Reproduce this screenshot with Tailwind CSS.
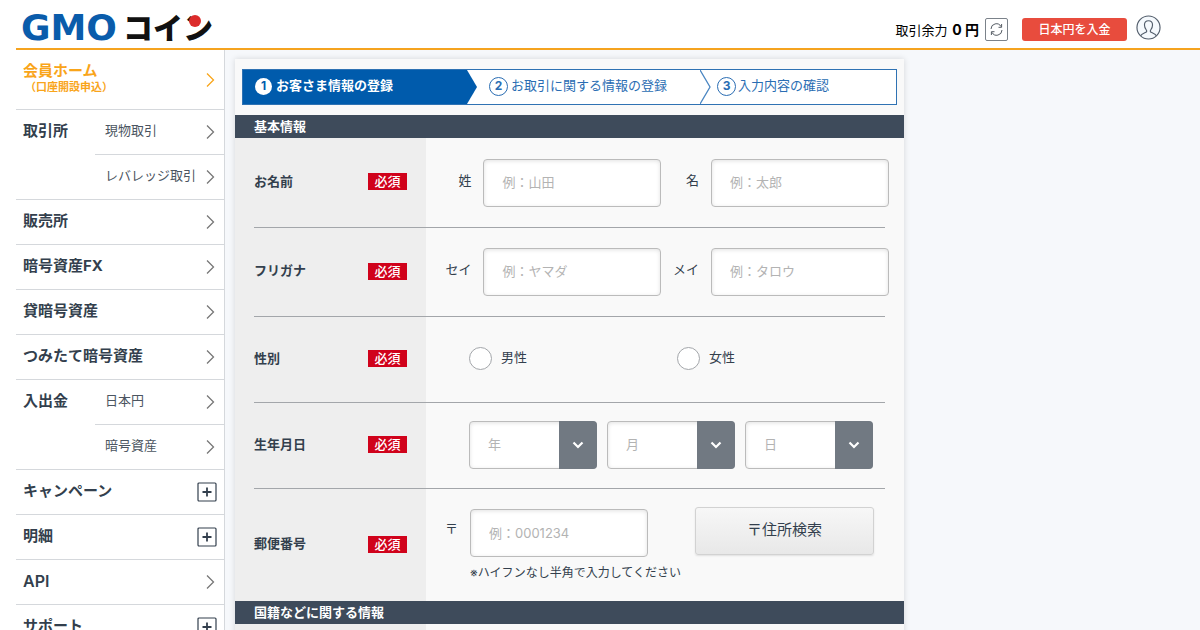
<!DOCTYPE html>
<html lang="ja">
<head>
<meta charset="utf-8">
<meta name="viewport" content="width=device-width, initial-scale=1">
<title>GMOコイン</title>
<script src="https://cdn.jsdelivr.net/npm/@tailwindcss/browser@4"></script>
</head>
<body class="min-h-screen bg-white font-['Inter','Noto_Sans_CJK_JP',sans-serif] text-[13px] text-[#333f4d]">
<svg class="hidden" aria-hidden="true">
  <symbol id="chev" viewBox="0 0 9 16"><path d="M1 1.500L7.500 8L1 14.500" fill="none" stroke="currentColor" stroke-width="1.300"/></symbol>
  <symbol id="plus" viewBox="0 0 20 20"><rect x="1" y="1" width="18" height="18" rx="1" fill="none" stroke="currentColor" stroke-width="1.200"/><path d="M5.500 10H14.500M10 5.500V14.500" stroke="currentColor" stroke-width="1.800"/></symbol>
  <symbol id="down" viewBox="0 0 12 8"><path d="M1.500 1.500L6 6L10.500 1.500" fill="none" stroke="currentColor" stroke-width="2.200"/></symbol>
</svg>

<header class="ml-4 flex h-[50px] items-center border-b-2 border-[#f5a31f] pl-[6px] pr-[39px]">
  <a href="#" aria-label="GMOコイン">
    <svg class="overflow-visible" width="192" height="48" viewBox="0 0 192 48">
      <text x="-1" y="40" font-family="DejaVu Sans" font-weight="700" font-size="36" fill="#0a5cab">GMO</text>
      <text x="101" y="39" font-family="Noto Sans CJK JP" font-weight="900" font-size="30" fill="#111">コイン</text>
      <circle cx="173" cy="21" r="6" fill="#dc2b2b"/>
    </svg>
  </a>
  <div class="ml-auto flex items-center pt-[10px]">
    <p class="whitespace-nowrap pt-px text-[13px] text-black">取引余力 <b class="ml-px text-[14px]">0 円</b></p>
    <button type="button" aria-label="更新" class="ml-[6px] grid size-[23px] place-items-center rounded-[2px] border border-[#7b828a] text-[#555c64]">
      <svg width="13" height="13" viewBox="0 0 13 13" fill="none" stroke="currentColor" stroke-width="1"><path d="M1 6A5.300 5.300 0 0 1 11 3.600M12 7A5.300 5.300 0 0 1 2 9.400"/><path d="M11.600 1V4.300H8.500M1.400 12V8.700H4.500"/></svg>
    </button>
    <button type="button" class="ml-[14px] h-[23px] w-[105px] rounded-[3px] bg-[#e84c3d] text-[12px] font-medium leading-[23px] text-white">日本円を入金</button>
    <button type="button" aria-label="アカウント" class="-mt-1 ml-[9px] text-[#525d6b]">
      <svg width="25" height="25" viewBox="0 0 26 26" fill="#f5f9fd" stroke="currentColor" stroke-width="1.200"><circle cx="13" cy="13" r="12"/><path d="M4.800 21.700C5.800 19.300 8.500 19 10.300 18C11.400 17.400 11.300 16.400 10.700 15.600C9.400 14 8.800 12.300 8.800 10.500C8.800 7.600 10.500 6 13 6S17.200 7.600 17.200 10.500C17.200 12.300 16.600 14 15.300 15.600C14.700 16.400 14.600 17.400 15.700 18C17.500 19 20.200 19.300 21.200 21.700" fill="none"/></svg>
    </button>
  </div>
</header>

<div class="flex">
  <nav class="ml-4 w-[209px] shrink-0 border-r border-[#d5d8dc] text-[15px] font-bold [&_svg]:shrink-0">
    <a href="#" class="flex h-[60px] items-center border-b border-[#d5d8dc] pl-[7px] pr-[9px] text-[#f9a51a]">
      <span class="flex-1 leading-4">会員ホーム<span class="block pb-[2px] pl-[2px] text-[11px] leading-4">（口座開設申込）</span></span>
      <svg class="h-4 w-[9px]"><use href="#chev"/></svg>
    </a>
    <div class="flex border-b border-[#d5d8dc]">
      <span class="w-[79px] pl-[7px] pt-[10px] leading-[22px]">取引所</span>
      <div class="flex-1 text-[13px] font-normal text-[#4b5561]">
        <a href="#" class="flex h-[45px] items-center justify-between border-b border-[#d5d8dc] pl-[10px] pr-[9px]"><span class="pb-[2px]">現物取引</span><svg class="h-4 w-[9px] text-[#777]"><use href="#chev"/></svg></a>
        <a href="#" class="flex h-[44px] items-center justify-between pl-[10px] pr-[9px]"><span class="whitespace-nowrap pb-[2px]">レバレッジ取引</span><svg class="h-4 w-[9px] text-[#777]"><use href="#chev"/></svg></a>
      </div>
    </div>
    <a href="#" class="flex h-[45px] items-center justify-between border-b border-[#d5d8dc] pl-[7px] pr-[9px]"><span class="pb-[2px]">販売所</span><svg class="h-4 w-[9px] text-[#777]"><use href="#chev"/></svg></a>
    <a href="#" class="flex h-[45px] items-center justify-between border-b border-[#d5d8dc] pl-[7px] pr-[9px]"><span class="pb-[2px]">暗号資産FX</span><svg class="h-4 w-[9px] text-[#777]"><use href="#chev"/></svg></a>
    <a href="#" class="flex h-[45px] items-center justify-between border-b border-[#d5d8dc] pl-[7px] pr-[9px]"><span class="pb-[2px]">貸暗号資産</span><svg class="h-4 w-[9px] text-[#777]"><use href="#chev"/></svg></a>
    <a href="#" class="flex h-[45px] items-center justify-between border-b border-[#d5d8dc] pl-[7px] pr-[9px]"><span class="pb-[2px]">つみたて暗号資産</span><svg class="h-4 w-[9px] text-[#777]"><use href="#chev"/></svg></a>
    <div class="flex border-b border-[#d5d8dc]">
      <span class="w-[79px] pl-[7px] pt-[10px] leading-[22px]">入出金</span>
      <div class="flex-1 text-[13px] font-normal text-[#4b5561]">
        <a href="#" class="flex h-[45px] items-center justify-between border-b border-[#d5d8dc] pl-[10px] pr-[9px]"><span class="pb-[2px]">日本円</span><svg class="h-4 w-[9px] text-[#777]"><use href="#chev"/></svg></a>
        <a href="#" class="flex h-[44px] items-center justify-between pl-[10px] pr-[9px]"><span class="pb-[2px]">暗号資産</span><svg class="h-4 w-[9px] text-[#777]"><use href="#chev"/></svg></a>
      </div>
    </div>
    <button type="button" class="flex h-[45px] w-full items-center justify-between border-b border-[#d5d8dc] px-[7px]"><span class="pb-[2px]">キャンペーン</span><svg class="size-5"><use href="#plus"/></svg></button>
    <button type="button" class="flex h-[45px] w-full items-center justify-between border-b border-[#d5d8dc] px-[7px]"><span class="pb-[2px]">明細</span><svg class="size-5"><use href="#plus"/></svg></button>
    <a href="#" class="flex h-[45px] items-center justify-between border-b border-[#d5d8dc] pl-[7px] pr-[9px]"><span class="pb-[2px] text-[16px] font-semibold">API</span><svg class="h-4 w-[9px] text-[#777]"><use href="#chev"/></svg></a>
    <button type="button" class="flex h-[45px] w-full items-center justify-between border-b border-[#d5d8dc] px-[7px]"><span class="pb-[2px]">サポート</span><svg class="size-5"><use href="#plus"/></svg></button>
  </nav>

  <main class="min-w-0 flex-1 bg-[#f6f8fb] pl-[10px] pt-[9px]">
    <form class="max-w-[669px] bg-[#f9f9f9] pt-[10px] shadow-[0_0_6px_rgba(0,0,0,0.14)]">
      <ol class="mx-[7px] flex h-[36px] border border-[#2f72b3] bg-white text-[#2a6db3]">
        <li class="flex bg-[#005bac] font-bold text-white">
          <span class="flex w-[224px] items-center gap-1 pb-[2px] pl-3"><span class="grid size-[17px] place-items-center rounded-full bg-white text-[12px] leading-none text-[#005bac]">1</span><span>お客さま情報の登録</span></span>
          <svg class="bg-white" width="10" height="34" viewBox="0 0 10 34"><path d="M0 0L10 17L0 34Z" fill="#005bac"/></svg>
        </li>
        <li class="flex">
          <span class="flex w-[223px] items-center gap-[3px] pb-[2px] pl-3"><span class="grid size-[19px] place-items-center rounded-full border border-[#2a6db3] text-[12px] font-bold leading-none">2</span><span class="whitespace-nowrap">お取引に関する情報の登録</span></span>
          <svg width="11" height="34" viewBox="0 0 11 34"><path d="M0 0L10 17L0 34" fill="none" stroke="#4a86c2" stroke-width="1.300"/></svg>
        </li>
        <li class="flex items-center gap-[2px] pb-[2px] pl-[6px]"><span class="grid size-[19px] place-items-center rounded-full border border-[#2a6db3] text-[12px] font-bold leading-none">3</span><span class="whitespace-nowrap">入力内容の確認</span></li>
      </ol>

      <h2 class="mt-[10px] h-[23px] bg-[#3e4b5b] pl-[19px] font-bold leading-[23px] text-white">基本情報</h2>
      <div class="bg-[linear-gradient(to_right,#eee_191px,#f9f9f9_191px)] px-[19px]">
        <div class="flex h-[90px] items-center border-b border-[#a3a6aa]">
          <div class="flex w-[172px] shrink-0 items-center justify-between pb-[2px] pr-[19px]"><b>お名前</b><span class="h-[17px] w-[39px] bg-[#d0021b] text-center font-medium leading-[16px] text-white">必須</span></div>
          <label for="sei" class="w-[46px] pb-1 text-right">姓</label>
          <input id="sei" type="text" placeholder="例：山田" class="ml-3 h-[48px] w-[178px] rounded-[4px] border border-[#bbb] bg-white px-[18px] pb-[2px] shadow-[inset_0_1px_4px_rgba(0,0,0,0.12)] placeholder:text-[#b3b3b3]">
          <label for="mei" class="w-[38px] pb-1 text-right">名</label>
          <input id="mei" type="text" placeholder="例：太郎" class="-mr-1 ml-3 h-[48px] w-[178px] rounded-[4px] border border-[#bbb] bg-white px-[18px] pb-[2px] shadow-[inset_0_1px_4px_rgba(0,0,0,0.12)] placeholder:text-[#b3b3b3]">
        </div>
        <div class="flex h-[89px] items-center border-b border-[#a3a6aa]">
          <div class="flex w-[172px] shrink-0 items-center justify-between pb-[2px] pr-[19px]"><b>フリガナ</b><span class="h-[17px] w-[39px] bg-[#d0021b] text-center font-medium leading-[16px] text-white">必須</span></div>
          <label for="seik" class="w-[46px] pb-1 text-right">セイ</label>
          <input id="seik" type="text" placeholder="例：ヤマダ" class="ml-3 h-[48px] w-[178px] rounded-[4px] border border-[#bbb] bg-white px-[18px] pb-[2px] shadow-[inset_0_1px_4px_rgba(0,0,0,0.12)] placeholder:text-[#b3b3b3]">
          <label for="meik" class="w-[38px] pb-1 text-right">メイ</label>
          <input id="meik" type="text" placeholder="例：タロウ" class="-mr-1 ml-3 h-[48px] w-[178px] rounded-[4px] border border-[#bbb] bg-white px-[18px] pb-[2px] shadow-[inset_0_1px_4px_rgba(0,0,0,0.12)] placeholder:text-[#b3b3b3]">
        </div>
        <fieldset class="flex h-[86px] items-center border-b border-[#a3a6aa] pb-[2px]">
          <div class="flex w-[172px] shrink-0 items-center justify-between pr-[19px]"><b>性別</b><span class="h-[17px] w-[39px] bg-[#d0021b] text-center font-medium leading-[16px] text-white">必須</span></div>
          <label class="ml-[43px] flex w-[208px] items-center gap-[9px]"><input type="radio" name="sex" class="size-[23px] appearance-none rounded-full border border-[#a3a6aa] bg-white checked:border-[7px] checked:border-[#005bac]"><span class="pb-[2px]">男性</span></label>
          <label class="flex items-center gap-[9px]"><input type="radio" name="sex" class="size-[23px] appearance-none rounded-full border border-[#a3a6aa] bg-white checked:border-[7px] checked:border-[#005bac]"><span class="pb-[2px]">女性</span></label>
        </fieldset>
        <div class="flex h-[86px] items-center border-b border-[#a3a6aa] pb-[2px]">
          <div class="flex w-[172px] shrink-0 items-center justify-between pr-[19px]"><b>生年月日</b><span class="h-[17px] w-[39px] bg-[#d0021b] text-center font-medium leading-[16px] text-white">必須</span></div>
          <div class="ml-[43px] flex gap-[10px]">
            <div class="relative"><select aria-label="年" class="h-[48px] w-[128px] appearance-none rounded-[4px] border border-[#bbb] bg-white px-[18px] text-[#b3b3b3] shadow-[inset_0_1px_4px_rgba(0,0,0,0.12)]"><option>年</option></select><span class="pointer-events-none absolute inset-y-0 right-0 grid w-[38px] place-items-center rounded-r-[4px] bg-[#717982] text-white"><svg width="12" height="8"><use href="#down"/></svg></span></div>
            <div class="relative"><select aria-label="月" class="h-[48px] w-[128px] appearance-none rounded-[4px] border border-[#bbb] bg-white px-[18px] text-[#b3b3b3] shadow-[inset_0_1px_4px_rgba(0,0,0,0.12)]"><option>月</option></select><span class="pointer-events-none absolute inset-y-0 right-0 grid w-[38px] place-items-center rounded-r-[4px] bg-[#717982] text-white"><svg width="12" height="8"><use href="#down"/></svg></span></div>
            <div class="relative"><select aria-label="日" class="h-[48px] w-[128px] appearance-none rounded-[4px] border border-[#bbb] bg-white px-[18px] text-[#b3b3b3] shadow-[inset_0_1px_4px_rgba(0,0,0,0.12)]"><option>日</option></select><span class="pointer-events-none absolute inset-y-0 right-0 grid w-[38px] place-items-center rounded-r-[4px] bg-[#717982] text-white"><svg width="12" height="8"><use href="#down"/></svg></span></div>
          </div>
        </div>
        <div class="flex h-[112px]">
          <div class="flex w-[172px] shrink-0 items-center justify-between pb-[2px] pr-[19px]"><b>郵便番号</b><span class="h-[17px] w-[39px] bg-[#d0021b] text-center font-medium leading-[16px] text-white">必須</span></div>
          <label for="zip" class="w-8 pt-[30px] text-right">〒</label>
          <div class="ml-3 pt-5">
            <input id="zip" type="text" placeholder="例：0001234" aria-describedby="zipnote" class="block h-[48px] w-[178px] rounded-[4px] border border-[#bbb] bg-white px-[18px] shadow-[inset_0_1px_4px_rgba(0,0,0,0.12)] placeholder:text-[#b3b3b3]">
            <p id="zipnote" class="mt-2 w-[178px] whitespace-nowrap text-[12px] leading-4">※ハイフンなし半角で入力してください</p>
          </div>
          <button type="button" class="ml-[47px] mt-[18px] h-[48px] w-[179px] rounded-[3px] border border-[#d2d2d2] bg-linear-to-b from-[#f7f7f7] to-[#e8e8e8] pb-[2px] text-[15px] shadow-[0_1px_2px_rgba(0,0,0,0.1)]">〒住所検索</button>
        </div>
      </div>
      <h2 class="h-[23px] bg-[#3e4b5b] pl-[19px] font-bold leading-[23px] text-white">国籍などに関する情報</h2>
      <div class="h-6 bg-[linear-gradient(to_right,#eee_191px,#f9f9f9_191px)]"></div>
    </form>
  </main>
</div>
</body>
</html>
